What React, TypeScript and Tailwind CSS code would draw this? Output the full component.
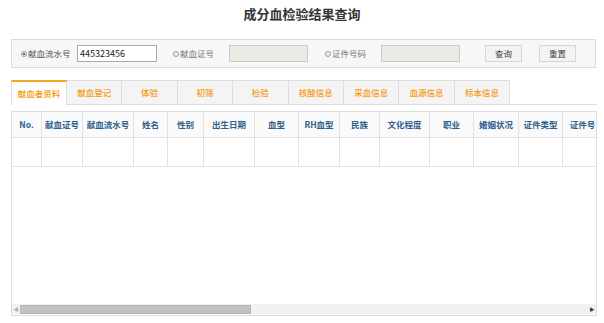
import React from "react";

const tabs = ["献血者资料", "献血登记", "体验", "初筛", "检验", "核酸信息", "采血信息", "血源信息", "标本信息"];

const columns: { label: string; w: string }[] = [
  { label: "No.", w: "w-[30px]" },
  { label: "献血证号", w: "w-[41px]" },
  { label: "献血流水号", w: "w-[51px]" },
  { label: "姓名", w: "w-[34px]" },
  { label: "性别", w: "w-[36px]" },
  { label: "出生日期", w: "w-[51px]" },
  { label: "血型", w: "w-[44px]" },
  { label: "RH血型", w: "w-[41px]" },
  { label: "民族", w: "w-[40px]" },
  { label: "文化程度", w: "w-[50px]" },
  { label: "职业", w: "w-[44px]" },
  { label: "婚姻状况", w: "w-[45px]" },
  { label: "证件类型", w: "w-[44px]" },
  { label: "证件号", w: "w-[40px]" },
];

function Radio({ checked }: { checked?: boolean }) {
  return (
    <span className="flex h-[6px] w-[6px] shrink-0 items-center justify-center rounded-full border border-[#9a9a9a] bg-[#eee]">
      {checked && <span className="h-[2px] w-[2px] rounded-full bg-[#333]" />}
    </span>
  );
}

function App() {
  return (
    <div
      className="h-[323px] w-[604px] overflow-hidden bg-white text-[8.5px] text-[#555]"
      style={{ fontFamily: '"Noto Sans CJK SC", "Noto Sans", sans-serif' }}
    >
      <div className="flex h-[28px] items-center justify-center text-[13px] font-bold text-[#333]">
        成分血检验结果查询
      </div>

      <div className="ml-[11px] mt-[11px] flex h-[29px] w-[585px] items-center border border-[#dcdcdc] bg-[#f7f7f7] pl-[9px]">
        <Radio checked />
        <span className="ml-[1px] w-[49px]">献血流水号</span>
        <div className="flex h-[17px] w-[80px] items-center border border-[#a9a9a9] bg-white pl-[2px] text-[9px] text-[#222]">
          445323456
        </div>

        <span className="ml-[16px]"><Radio /></span>
        <span className="ml-[1px] w-[49px] text-[#777]">献血证号</span>
        <div className="h-[17px] w-[79px] border border-[#c9c9c9] bg-[#ebebe4]" />

        <span className="ml-[17px]"><Radio /></span>
        <span className="ml-[1px] w-[49px] text-[#777]">证件号码</span>
        <div className="h-[17px] w-[79px] border border-[#c9c9c9] bg-[#ebebe4]" />

        <button className="ml-[25px] flex h-[17px] w-[37px] items-center justify-center border border-[#d6d6d6] bg-[#f3f3f3] text-[#444]">
          查询
        </button>
        <button className="ml-[17px] flex h-[17px] w-[37px] items-center justify-center border border-[#d6d6d6] bg-[#f3f3f3] text-[#444]">
          重置
        </button>
      </div>

      <div className="ml-[11px] mt-[12px] flex h-[25px] w-[586px] border-b border-[#dddddd]">
        {tabs.map((t, i) => (
          <div
            key={t}
            className={
              i === 0
                ? "-mb-px flex h-[25px] w-[56px] items-center justify-center border-x border-t-2 border-[#dddddd] border-t-[#f5a623] bg-white font-medium text-[#f39800]"
                : "flex h-[24px] w-[55.4px] items-center justify-center border-r border-t border-[#dddddd] bg-[#f4f4f4] font-medium text-[#f59a10]"
            }
          >
            {t}
          </div>
        ))}
      </div>

      <div className="ml-[11px] mt-[6px] flex h-[205px] w-[586px] flex-col overflow-hidden border border-[#dddddd]">
        <div className="flex h-[26px] shrink-0 border-b border-[#e2e2e2] bg-[#fafafa]">
          {columns.map((c) => (
            <div
              key={c.label}
              className={`${c.w} flex shrink-0 items-center justify-center border-r border-[#e2e2e2] font-bold text-[#2d5f8a]`}
            >
              {c.label}
            </div>
          ))}
        </div>
        <div className="flex h-[29px] shrink-0 border-b border-[#e2e2e2]">
          {columns.map((c) => (
            <div key={c.label} className={`${c.w} shrink-0 border-r border-[#e2e2e2]`} />
          ))}
        </div>
        <div className="flex-1" />
        <div className="mb-[1px] flex h-[10px] shrink-0 items-center bg-[#f1f1f1]">
          <div className="flex h-[10px] w-[8px] items-center justify-center text-[5px] text-[#aaa]">◀</div>
          <div className="h-[9px] w-[231px] border border-[#b5b5b5] bg-[#c2c2c2]" />
          <div className="flex-1" />
          <div className="flex h-[10px] w-[8px] items-center justify-center text-[5px] text-[#333]">▶</div>
        </div>
      </div>
    </div>
  );
}

export default App;
